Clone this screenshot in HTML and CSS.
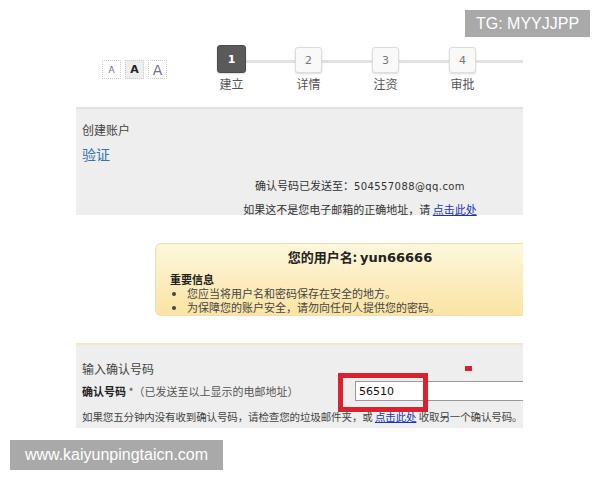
FILE: index.html
```html
<!DOCTYPE html>
<html lang="zh-CN">
<head>
  <meta charset="UTF-8">
  <title>验证</title>
  <link rel="stylesheet" href="styles.css">
</head>
<body>
  <div class="page">
    <div class="top">
      <div class="sizes">
        <span class="a s1">A</span>
        <span class="a s2">A</span>
        <span class="a s3">A</span>
      </div>
      <div class="steps">
        <div class="step on"><span class="num">1</span><span class="lbl">建立</span></div>
        <div class="step"><span class="num">2</span><span class="lbl">详情</span></div>
        <div class="step"><span class="num">3</span><span class="lbl">注资</span></div>
        <div class="step"><span class="num">4</span><span class="lbl">审批</span></div>
      </div>
    </div>

    <div class="panel head">
      <div class="crumb">创建账户</div>
      <div class="title">验证</div>
      <div class="sent">
        <p>确认号码已发送至：<span class="mail">504557088@qq.com</span></p>
        <p>如果这不是您电子邮箱的正确地址，请 <a href="#">点击此处</a></p>
      </div>
    </div>

    <div class="notice">
      <h3>您的用户名: <span class="user">yun66666</span></h3>
      <b>重要信息</b>
      <ul>
        <li>您应当将用户名和密码保存在安全的地方。</li>
        <li>为保障您的账户安全，请勿向任何人提供您的密码。</li>
      </ul>
    </div>

    <div class="panel confirm">
      <div class="crumb">输入确认号码</div>
      <div class="row">
        <label><b>确认号码</b> <span class="hint">*（已发送至以上显示的电邮地址）</span></label>
        <input type="text" value="56510">
      </div>
      <p class="resend">如果您五分钟内没有收到确认号码，请检查您的垃圾邮件夹，或 <a href="#">点击此处</a> 收取另一个确认号码。</p>
      <span class="mark"></span>
      <span class="dot"></span>
    </div>
  </div>

  <div class="tg">TG: MYYJJPP</div>
  <div class="site">www.kaiyunpingtaicn.com</div>
</body>
</html>
```

FILE: styles.css
```css
body{
  margin:0;
  background:#fff;
  color:#333;
  font-family:"Noto Sans CJK SC","DejaVu Sans",sans-serif;
  font-size:12px;
}
p{
  margin:0;
}
a{
  color:#1a35b8;
}
.page{
  position:relative;
  margin-left:76px;
  width:447px;
  padding-top:45px;
  overflow:hidden;
}
.top{
  display:flex;
  height:62px;
}
.sizes{
  display:flex;
  gap:4px;
  margin:15px 0 0 26px;
  height:19px;
}
.a{
  width:19px;
  height:19px;
  box-sizing:border-box;
  border:1px dotted #ccc;
  display:flex;
  align-items:center;
  justify-content:center;
  font-family:"DejaVu Sans",sans-serif;
  color:#6a6f98;
}
.s1{
  font-size:9px;
}
.s2{
  font-size:11px;
  font-weight:bold;
  color:#222;
  background:#eee;
}
.s3{
  font-size:14px;
}
.steps{
  position:relative;
  display:flex;
  flex:1;
  margin-left:50px;
}
.steps::before{
  content:"";
  position:absolute;
  left:20px;
  right:0;
  top:15px;
  height:3px;
  background:#e2e2e2;
}
.step{
  position:relative;
  width:29px;
  margin-right:48px;
  display:flex;
  flex-direction:column;
  align-items:center;
}
.num{
  width:27px;
  height:26px;
  margin-top:2px;
  box-sizing:border-box;
  border:1px solid #ddd;
  border-radius:3px;
  background:#f9f9f9;
  box-shadow:0 1px 2px rgba(0,0,0,0.15);
  color:#777;
  font-family:"DejaVu Sans",sans-serif;
  font-size:11px;
  display:flex;
  align-items:center;
  justify-content:center;
}
.step.on .num{
  width:29px;
  height:28px;
  margin-top:0;
  background:#5a5a5a;
  border-color:#4a4a4a;
  color:#fff;
  font-weight:bold;
}
.lbl{
  white-space:nowrap;
  margin-top:4px;
  color:#555;
  line-height:14px;
}
.panel{
  background:#eeeeee;
  border-top:2px solid #e2e2e2;
  padding:0 6px;
}
.head{
  height:108px;
  padding-top:13px;
  box-sizing:border-box;
}
.crumb{
  line-height:16px;
  color:#444;
}
.title{
  margin-top:7px;
  font-size:14px;
  color:#2f74b5;
  line-height:18px;
}
.sent{
  width:320px;
  margin:11px 0 0 118px;
  text-align:center;
  line-height:23px;
  font-size:11px;
}
.mail{
  font-family:"DejaVu Sans",sans-serif;
  font-size:10px;
  letter-spacing:0.4px;
}
.notice{
  width:410px;
  height:73px;
  box-sizing:border-box;
  margin:28px 0 0 79px;
  padding:5px 0 0 14px;
  border:1px solid #f1deaa;
  border-radius:6px;
  background:linear-gradient(#fdf7dc,#fbe4a4);
  font-size:11px;
  line-height:14px;
}
.notice h3{
  margin:0 0 6px -14px;
  text-align:center;
  font-size:13px;
  line-height:16px;
  color:#222;
}
.user{
  font-family:"DejaVu Sans",sans-serif;
}
.notice b{
  display:block;
  color:#222;
}
.notice ul{
  margin:0;
  padding-left:17px;
  color:#444;
}
.confirm{
  position:relative;
  margin-top:27px;
  height:85px;
  box-sizing:border-box;
  padding-top:16px;
  border-top-color:#f4e6c6;
}
.row{
  display:flex;
  align-items:center;
  margin-top:3px;
  height:22px;
}
.row label{
  flex-shrink:0;
  width:273px;
  font-size:11px;
}
.row b{
  color:#222;
}
.hint{
  color:#555;
}
.row input{
  flex-shrink:0;
  width:200px;
  height:20px;
  box-sizing:border-box;
  border:1px solid #999;
  padding:0 3px;
  font-family:"DejaVu Sans",sans-serif;
  font-size:11px;
  color:#111;
}
.resend{
  margin-top:8px;
  font-size:10.5px;
  line-height:14px;
  letter-spacing:-0.12px;
  white-space:nowrap;
  color:#444;
}
.mark{
  position:absolute;
  left:262px;
  top:28px;
  width:90px;
  height:39px;
  box-sizing:border-box;
  border:5px solid #d7222f;
}
.dot{
  position:absolute;
  left:389px;
  top:21px;
  width:7px;
  height:5px;
  background:#d7222f;
}
.tg,
.site{
  position:absolute;
  background:#a9a9a9;
  color:#fff;
  font-family:"Liberation Sans",Arial,sans-serif;
  font-size:16px;
  display:flex;
  align-items:center;
  justify-content:center;
}
.tg{
  left:465px;
  top:10px;
  width:125px;
  height:27px;
}
.site{
  left:10px;
  top:440px;
  width:213px;
  height:30px;
}
```
